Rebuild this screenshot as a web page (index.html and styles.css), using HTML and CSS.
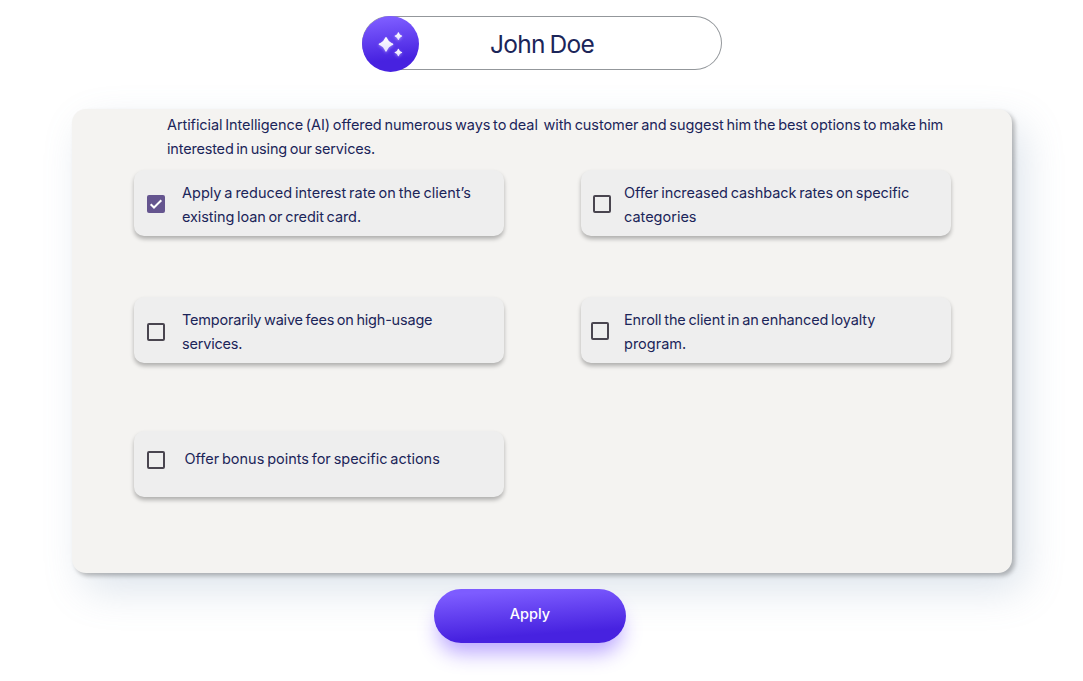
FILE: index.html
```html
<!DOCTYPE html>
<html lang="en">
<head>
<meta charset="utf-8">
<title>John Doe</title>
<link rel="stylesheet" href="styles.css">
</head>
<body>
<header class="client">
  <div class="client-icon">
    <svg class="sparkles" width="57" height="56" viewBox="0 0 57 56">
      <defs>
        <linearGradient id="shine" x1="0" y1="0" x2="0" y2="1"><stop offset="0" stop-color="#fff"/><stop offset="1" stop-color="#e4dfff"/></linearGradient>
      </defs>
      <g fill="url(#shine)">
        <path d="M24 20.9Q24.8 20.9 25.3 22.6Q26.6 25.9 29.6 27Q31.4 27.5 31.4 28.3Q31.4 29.1 29.6 29.6Q26.6 30.7 25.3 34Q24.8 35.7 24 35.7Q23.2 35.7 22.7 34Q21.4 30.7 18.4 29.6Q16.6 29.1 16.6 28.3Q16.6 27.5 18.4 27Q21.4 25.9 22.7 22.6Q23.2 20.9 24 20.9Z"/>
        <path d="M36.4 16.3Q37 16.3 37.3 17.5Q37.8 18.8 39.1 19.3Q40.2 19.6 40.2 20.1Q40.2 20.6 39.1 20.9Q37.8 21.4 37.3 22.7Q37 23.9 36.4 23.9Q35.8 23.9 35.5 22.7Q35 21.4 33.7 20.9Q32.6 20.6 32.6 20.1Q32.6 19.6 33.7 19.3Q35 18.8 35.5 17.5Q35.8 16.3 36.4 16.3Z"/>
        <path d="M36.4 32.7Q37 32.7 37.3 33.9Q37.8 35.2 39.1 35.7Q40.2 36 40.2 36.5Q40.2 37 39.1 37.3Q37.8 37.8 37.3 39.1Q37 40.3 36.4 40.3Q35.8 40.3 35.5 39.1Q35 37.8 33.7 37.3Q32.6 37 32.6 36.5Q32.6 36 33.7 35.7Q35 35.2 35.5 33.9Q35.8 32.7 36.4 32.7Z"/>
      </g>
    </svg>
  </div>
  <h1 class="client-name">John Doe</h1>
</header>
<main class="panel">
  <p class="intro"><span class="line intro-first">Artificial Intelligence (AI) offered numerous ways to deal&nbsp; with customer and suggest him the best options to make him</span><span class="line intro-second">interested in using our services.</span></p>
  <div class="options">
    <label class="option">
      <svg class="box" width="18" height="18" viewBox="0 0 18 18"><rect width="18" height="18" rx="2" fill="#65558f"/><path d="M3.7 9.2L7 12.5L14.3 5.2" fill="none" stroke="#fff" stroke-width="2"/></svg>
      <span class="label"><span class="line reduced">Apply a reduced interest rate on the client’s</span><span class="line existing">existing loan or credit card.</span></span>
    </label>
    <label class="option cashback">
      <svg class="box" width="18" height="18" viewBox="0 0 18 18"><rect x="1" y="1" width="16" height="16" rx="1" fill="none" stroke="#49454f" stroke-width="2"/></svg>
      <span class="label"><span class="line offer">Offer increased cashback rates on specific</span><span class="line categories">categories</span></span>
    </label>
    <label class="option fees">
      <svg class="box" width="18" height="18" viewBox="0 0 18 18"><rect x="1" y="1" width="16" height="16" rx="1" fill="none" stroke="#49454f" stroke-width="2"/></svg>
      <span class="label"><span class="line waive">Temporarily waive fees on high-usage</span><span class="line services">services.</span></span>
    </label>
    <label class="option loyalty">
      <svg class="box" width="18" height="18" viewBox="0 0 18 18"><rect x="1" y="1" width="16" height="16" rx="1" fill="none" stroke="#49454f" stroke-width="2"/></svg>
      <span class="label"><span class="line enroll">Enroll the client in an enhanced loyalty</span><span class="line program">program.</span></span>
    </label>
    <label class="option bonus">
      <svg class="box" width="18" height="18" viewBox="0 0 18 18"><rect x="1" y="1" width="16" height="16" rx="1" fill="none" stroke="#49454f" stroke-width="2"/></svg>
      <span class="label"><span class="line points">Offer bonus points for specific actions</span></span>
    </label>
  </div>
</main>
<button class="apply">Apply</button>
</body>
</html>
```
FILE: styles.css
```css
* { box-sizing: border-box; }
body {
  margin: 0;
  height: 681px;
  padding-top: 16px;
  overflow: hidden;
  background: #fff;
  color: #1b2559;
  font: 400 14.5px/24px Inter, "Open Sans", sans-serif;
}
.client {
  display: flex;
  width: 360px;
  height: 54px;
  margin-left: 362px;
  border-radius: 27px;
  box-shadow: inset 0 0 0 1px #93979b;
}
.client-icon {
  flex: none;
  width: 57px;
  height: 56px;
  border-radius: 50%;
  background: linear-gradient(174deg, #7d5cff 8%, #4722e0 76%);
}
.sparkles { display: block; filter: drop-shadow(0 1px 1.5px rgba(210, 195, 255, .5)); }
.client-name {
  margin: 0 0 0 71px;
  font-size: 24.5px;
  font-weight: 400;
  line-height: 56px;
  letter-spacing: -.75px;
  word-spacing: -1.2px;
  white-space: nowrap;
}
.panel {
  width: 940px;
  height: 464px;
  margin: 39px 0 0 72px;
  padding-top: 4px;
  border-radius: 14px;
  background: #f4f3f1;
  box-shadow: 3px 3px 4px rgba(0, 0, 0, .25), 12px 17px 40px rgba(112, 144, 176, .24);
}
.intro { margin: 0 0 9px 95px; }
.line { display: block; white-space: nowrap; word-spacing: -1.2px; }
.intro-first { letter-spacing: -.08px; }
.intro-second { letter-spacing: -.18px; }
.existing { letter-spacing: -.09px; }
.offer { letter-spacing: -.07px; }
.waive { letter-spacing: -.2px; }
.services { letter-spacing: -.2px; }
.enroll { letter-spacing: -.12px; }
.points { letter-spacing: -.02px; }
.options {
  display: grid;
  grid-template-columns: 370px 370px;
  grid-template-rows: 66px 66px 66px;
  column-gap: 77px;
  row-gap: 61px;
  margin-left: 62px;
}
.option {
  display: flex;
  align-items: flex-start;
  gap: 17px;
  padding: 11px 0 0 13px;
  border-radius: 10px;
  background: #eee;
  box-shadow: 0 3px 4px rgba(0, 0, 0, .28);
}
.box { flex: none; display: block; margin-top: 14px; }
.cashback { padding-left: 12px; gap: 13px; }
.fees .box { margin-top: 15px; }
.loyalty { padding-left: 10px; gap: 15px; }
.bonus { margin-top: 7px; margin-bottom: -7px; padding-top: 16px; gap: 19.5px; }
.bonus .box { margin-top: 4px; }
.apply {
  display: block;
  width: 192px;
  height: 54px;
  margin: 16px 0 0 434px;
  padding: 0 0 4px;
  border: 0;
  border-radius: 27px;
  background: linear-gradient(176deg, #7d5cff 10%, #4722e0 78%);
  box-shadow: 0 14px 20px -4px rgba(112, 72, 255, .48);
  color: #fff;
  font: 500 14.5px/24px Inter, "Open Sans", sans-serif;
}
```
